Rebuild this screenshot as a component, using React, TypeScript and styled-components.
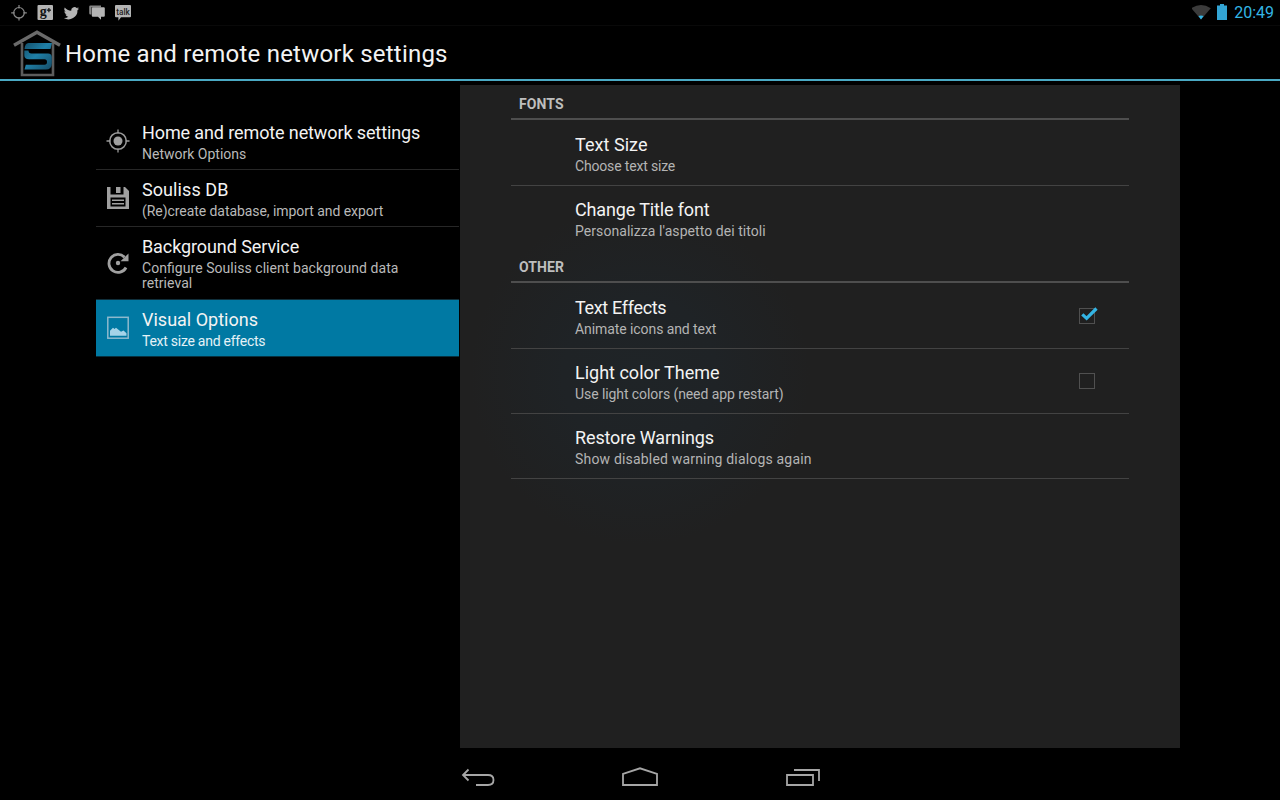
import React from "react";
import styled, { createGlobalStyle } from "styled-components";

const Global = createGlobalStyle`
  * { box-sizing: border-box; }
  body { margin: 0; background: #000; font-family: Roboto, sans-serif; font-feature-settings: "liga" 1; }
  svg { display: block; flex: none; }
`;

const Screen = styled.div`
  width: 1280px;
  height: 800px;
  display: flex;
  flex-direction: column;
  overflow: hidden;
  background: #000;
  color: #f3f3f3;
`;

const StatusBar = styled.header`
  height: 26px;
  flex: none;
  display: flex;
  align-items: flex-start;
  justify-content: space-between;
  border-bottom: 1px solid #090909;
`;

const Clock = styled.span`
  color: #33b5e5;
  font-size: 16px;
  line-height: 25px;
`;

const StatusRight = styled.div`
  display: flex;
  padding-right: 6px;
`;

const TitleBar = styled.div`
  height: 55px;
  flex: none;
  display: flex;
  border-bottom: 2px solid #4aa9c4;
`;

const Title = styled.h1`
  margin: 0;
  padding: 1px 0 0 1px;
  font-size: 24px;
  font-weight: 400;
  line-height: 55px;
  letter-spacing: 0.215px;
  white-space: nowrap;
`;

const Body = styled.main`
  flex: 1;
  display: flex;
  padding: 4px 100px 0 96px;
`;

const Nav = styled.nav`
  width: 364px;
  padding: 28px 1px 0 0;
`;

const NavText = styled.div`
  width: 300px;
  margin-left: 12px;
  padding-top: 2px;
`;

const NavItem = styled.div<{ $active?: boolean; $tall?: boolean }>`
  display: flex;
  align-items: center;
  height: ${(p) => (p.$tall ? 73 : 57)}px;
  padding: 0 0 0 10px;
  background: ${(p) => (p.$active ? "#0079a3" : "transparent")};
  border-bottom: 1px solid ${(p) => (p.$active ? "#05303f" : p.$tall ? "#10303c" : "#272727")};

  ${NavText} {
    padding-top: ${(p) => (p.$tall ? 0 : 2)}px;
  }
`;

const ItemTitle = styled.div<{ $track: number }>`
  font-size: 18px;
  line-height: 21px;
  letter-spacing: ${(p) => p.$track}px;
  white-space: nowrap;
`;

const NavSub = styled.div<{ $track: number; $active?: boolean }>`
  margin-top: 4px;
  font-size: 14px;
  line-height: 15px;
  letter-spacing: ${(p) => p.$track}px;
  color: ${(p) => (p.$active ? "#e4f2f7" : "#b9b9b9")};
  white-space: pre;
`;

const Panel = styled.section`
  width: 720px;
  height: 663px;
  padding: 3px 51px 0;
  background: radial-gradient(circle 170px at 180px 290px, #1f2427 0%, #1f2326 45%, #202020 100%) #202020;
`;

const SectionHead = styled.h2`
  margin: 0 0 1px;
  height: 32px;
  padding: 8px 8px 0;
  border-bottom: 2px solid #4e4e4e;
  font-size: 14px;
  font-weight: 700;
  line-height: 16px;
  letter-spacing: 0.1px;
  color: #bebebe;
`;

const Pref = styled.div<{ $last?: boolean }>`
  height: 65px;
  padding: 0 29px 0 64px;
  display: flex;
  align-items: center;
  justify-content: space-between;
  border-bottom: 1px solid ${(p) => (p.$last ? "transparent" : "#434343")};
`;

const PrefText = styled.div`
  padding-top: 2px;
`;

const PrefSub = styled.div<{ $track: number }>`
  margin-top: 3px;
  font-size: 14px;
  line-height: 16px;
  letter-spacing: ${(p) => p.$track}px;
  color: #b4b4b4;
  white-space: nowrap;
`;

const SystemBar = styled.footer`
  height: 52px;
  flex: none;
`;

const StatusIcons = () => (
  <svg width="140" height="25" viewBox="0 0 140 25">
    <g fill="none" stroke="#8a8a8a" strokeWidth="1.2">
      <circle cx="19" cy="12.800" r="5.300" />
      <path d="M19 5v3.500M19 17v3.500M11.200 12.800h3.500M23.300 12.800h3.500" />
    </g>
    <rect x="37.500" y="5" width="15.500" height="15" rx="1" fill="#b4b4b4" />
    <text x="39.800" y="15.800" fontFamily="Liberation Serif, serif" fontWeight="700" fontSize="14" fill="#111">g</text>
    <path d="M46.800 10.200h4.200M48.900 8.100v4.200" stroke="#111" strokeWidth="1.200" />
    <path transform="translate(0 .2)" d="M79 8.200c-.5.250-1.100.4-1.700.5.600-.4 1.100-1 1.300-1.700-.6.350-1.200.6-1.900.75a3.300 3.300 0 0 0-5.500 2.800c-2.700-.1-5-1.300-6.400-3.200a3.200 3.200 0 0 0 .95 4.200c-.5 0-1-.15-1.400-.4 0 1.500 1.050 2.800 2.500 3.100-.45.1-.9.120-1.400.05.4 1.200 1.500 2.150 2.900 2.150A6.200 6.200 0 0 1 63.800 17.800a9 9 0 0 0 13.700-8c.6-.4 1.100-.9 1.500-1.600z" fill="#b4b4b4" />
    <path d="M90.500 5.500H101v1.700h-9.600v7.300h-.9a1.300 1.300 0 0 1-1.300-1.300V6.800a1.300 1.300 0 0 1 1.300-1.300z" fill="#858585" />
    <path d="M92.800 7.200h11a1 1 0 0 1 1 1v7.500a1 1 0 0 1-1 1h-2.800v3l-3-3h-5.200a1 1 0 0 1-1-1V8.200a1 1 0 0 1 1-1z" fill="#b4b4b4" />
    <path d="M116 5h14a1 1 0 0 1 1 1v10.300a1 1 0 0 1-1 1h-9l-2.600 3.500v-3.500H116a1 1 0 0 1-1-1V6a1 1 0 0 1 1-1z" fill="#b4b4b4" />
    <text x="116.300" y="14.800" fontFamily="Roboto, sans-serif" fontWeight="500" fontSize="9" textLength="13.500" lengthAdjust="spacingAndGlyphs" fill="#222">talk</text>
  </svg>
);

const SignalIcons = () => (
  <svg width="42" height="25" viewBox="0 0 42 25">
    <path d="M-.8 8.200q9.800-6.400 19.600 0L9 19.500z" fill="#3b3b3b" />
    <path d="M6.400 16q2.600-1 5.200 0L9 19.500z" fill="#33b5e5" />
    <path d="M28 4h4v1.500h3V20H25V5.500h3z" fill="#33a5d5" />
  </svg>
);

const Logo = () => (
  <svg width="64" height="53" viewBox="0 26 64 53">
    <defs>
      <linearGradient id="blue" x1="0" y1="0" x2="1" y2="1">
        <stop offset="0" stopColor="#14506b" />
        <stop offset=".45" stopColor="#1f80a8" />
        <stop offset="1" stopColor="#164c66" />
      </linearGradient>
    </defs>
    <path d="M22 43v32h31V43" fill="none" stroke="#5c5c5c" strokeWidth="2.600" />
    <path d="M14 45.300L37 32.300 60 45.300" fill="none" stroke="#6a6a6a" strokeWidth="3.400" />
    <path d="M28.500 43H52l-1.500 6H24.500q.5-6 4-6zM24.300 50.500h4.200q0 3 3 3H48q3.800 0 3.800 4v6q0 6-6 6H24.500l1.300-4.800h18.700q2.500 0 2.500-2.700t-2.500-2.700H29q-4.700 0-4.700-4z" fill="url(#blue)" />
  </svg>
);

const TargetIcon = () => (
  <svg width="24" height="24" viewBox="0 0 24 24">
    <circle cx="12" cy="12" r="4.500" fill="#a0a0a0" />
    <circle cx="12" cy="12" r="8.300" fill="none" stroke="#999" strokeWidth="1.500" />
    <path d="M12 .5v4M12 19.500v4M.5 12h4M19.500 12h4" stroke="#999" strokeWidth="1.300" />
  </svg>
);

const DiskIcon = () => (
  <svg width="24" height="24" viewBox="0 0 24 24">
    <path fillRule="evenodd" fill="#a0a0a0" d="M1 1h3.500v7.500h13V1H19l4 4v18H1zM4.500 11.500v9h15v-9z" />
    <path fill="#a0a0a0" d="M10 1h4.500v6H10zM6 13.500h12v1.500H6zM6 17h12v1.500H6z" />
  </svg>
);

const RefreshIcon = () => (
  <svg width="24" height="24" viewBox="0 0 24 24">
    <path d="M18.500 6.200A9 9 0 1 0 20 16.500" fill="none" stroke="#a0a0a0" strokeWidth="2.800" />
    <path d="M22.500 2.500v7.700h-8z" fill="#a0a0a0" />
    <circle cx="12" cy="12" r="2.200" fill="#a0a0a0" />
  </svg>
);

const PictureIcon = () => (
  <svg width="24" height="24" viewBox="0 0 24 24">
    <rect x="1.800" y="1.300" width="20.400" height="20.900" fill="none" stroke="#8db9cd" strokeWidth="1.500" />
    <path d="M4 19.800v-5l3-3 1.500 1.200 1.500-1.200 5 4 2.500-1.300 3 2.800v2.500z" fill="#a5d3e8" />
  </svg>
);

const CheckBox = ({ on }: { on?: boolean }) => (
  <svg width="24" height="24" viewBox="0 0 24 24">
    <rect x="3.500" y="4.500" width="15" height="15" fill="none" stroke="#505050" />
    {on && <path d="M6.300 10.300l4.300 4L20.500 4.500" fill="none" stroke="#33b5e5" strokeWidth="3.200" />}
  </svg>
);

const NavKeys = () => (
  <svg width="1280" height="52" viewBox="0 748 1280 52">
    <g fill="none" stroke="#a6a6a6" strokeWidth="1.800">
      <path d="M463 775h25q5.500 0 5.500 5t-5.500 5h-12M468.500 769.500L463 775l5.500 5.500" />
      <path d="M623 785v-11l17-5.700 17 5.700v11z" />
      <path d="M787 775h26v10h-26zM794 770h25v11" />
    </g>
  </svg>
);

type Entry = { title: string; sub: string; a: number; b: number };
type NavEntry = Entry & { icon: React.ReactNode; active?: boolean; tall?: boolean };
type PrefEntry = Entry & { check?: boolean; last?: boolean };

const nav: NavEntry[] = [
  { icon: <TargetIcon />, title: "Home and remote network settings", sub: "Network Options", a: -0.115, b: 0 },
  { icon: <DiskIcon />, title: "Souliss DB", sub: "(Re)create database, import and export", a: 0.08, b: -0.06 },
  { icon: <RefreshIcon />, title: "Background Service", sub: "Configure Souliss client background data\nretrieval", a: -0.09, b: 0.05, tall: true },
  { icon: <PictureIcon />, title: "Visual Options", sub: "Text size and effects", a: 0, b: -0.26, active: true },
];

const sections: { name: string; rows: PrefEntry[] }[] = [
  {
    name: "FONTS",
    rows: [
      { title: "Text Size", sub: "Choose text size", a: 0.05, b: -0.17 },
      { title: "Change Title font", sub: "Personalizza l'aspetto dei titoli", a: -0.14, b: 0.06, last: true },
    ],
  },
  {
    name: "OTHER",
    rows: [
      { title: "Text Effects", sub: "Animate icons and text", a: -0.33, b: -0.08, check: true },
      { title: "Light color Theme", sub: "Use light colors (need app restart)", a: 0, b: -0.08, check: false },
      { title: "Restore Warnings", sub: "Show disabled warning dialogs again", a: -0.13, b: 0.18 },
    ],
  },
];

export default function App() {
  return (
    <Screen>
      <Global />
      <StatusBar>
        <StatusIcons />
        <StatusRight>
          <SignalIcons />
          <Clock>20:49</Clock>
        </StatusRight>
      </StatusBar>
      <TitleBar>
        <Logo />
        <Title>Home and remote network settings</Title>
      </TitleBar>
      <Body>
        <Nav>
          {nav.map((n) => (
            <NavItem key={n.title} $active={n.active} $tall={n.tall}>
              {n.icon}
              <NavText>
                <ItemTitle $track={n.a}>{n.title}</ItemTitle>
                <NavSub $track={n.b} $active={n.active}>{n.sub}</NavSub>
              </NavText>
            </NavItem>
          ))}
        </Nav>
        <Panel>
          {sections.map((s) => (
            <React.Fragment key={s.name}>
              <SectionHead>{s.name}</SectionHead>
              {s.rows.map((r) => (
                <Pref key={r.title} $last={r.last}>
                  <PrefText>
                    <ItemTitle $track={r.a}>{r.title}</ItemTitle>
                    <PrefSub $track={r.b}>{r.sub}</PrefSub>
                  </PrefText>
                  {r.check !== undefined && <CheckBox on={r.check} />}
                </Pref>
              ))}
            </React.Fragment>
          ))}
        </Panel>
      </Body>
      <SystemBar>
        <NavKeys />
      </SystemBar>
    </Screen>
  );
}
